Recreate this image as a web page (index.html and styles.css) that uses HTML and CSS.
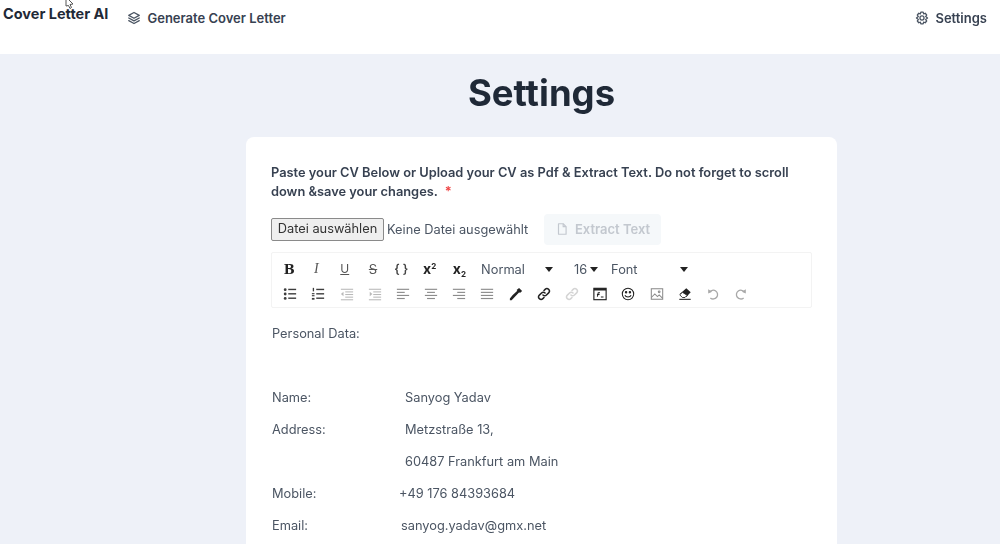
FILE: index.html
```html
<!DOCTYPE html>
<html lang="en">
<head>
<meta charset="utf-8">
<title>Settings</title>
<link rel="stylesheet" href="styles.css">
</head>
<body>
<svg class="defs" width="0" height="0" aria-hidden="true">
  <symbol id="i-ul" viewBox="0 0 16 16"><g fill="currentColor"><circle cx="2.5" cy="3" r="1.6"/><circle cx="2.5" cy="8" r="1.6"/><circle cx="2.5" cy="13" r="1.6"/><rect x="6" y="2" width="9" height="1.6"/><rect x="6" y="7" width="9" height="1.6"/><rect x="6" y="12" width="9" height="1.6"/></g></symbol>
  <symbol id="i-ol" viewBox="0 0 16 16"><g fill="currentColor"><rect x="2" y="1" width="1.5" height="4"/><rect x="1" y="7" width="3" height="1.3"/><rect x="1" y="9.3" width="3" height="1.3"/><rect x="1" y="12.5" width="3" height="2"/><rect x="6" y="2" width="9" height="1.6"/><rect x="6" y="7" width="9" height="1.6"/><rect x="6" y="12" width="9" height="1.6"/></g></symbol>
  <symbol id="i-out" viewBox="0 0 16 16"><g fill="currentColor"><path d="M1 8l3-2.5v5z"/><rect x="1" y="2" width="14" height="1.2"/><rect x="6" y="5" width="9" height="1.2"/><rect x="6" y="8" width="9" height="1.2"/><rect x="6" y="11" width="9" height="1.2"/><rect x="1" y="14" width="14" height="1.2"/></g></symbol>
  <symbol id="i-in" viewBox="0 0 16 16"><g fill="currentColor"><path d="M5 8L2 5.500v5z"/><rect x="1" y="2" width="14" height="1.2"/><rect x="6" y="5" width="9" height="1.2"/><rect x="6" y="8" width="9" height="1.2"/><rect x="6" y="11" width="9" height="1.2"/><rect x="1" y="14" width="14" height="1.2"/></g></symbol>
  <symbol id="i-left" viewBox="0 0 16 16"><g fill="currentColor"><rect x="1" y="2" width="14" height="1.3"/><rect x="1" y="5.500" width="9" height="1.3"/><rect x="1" y="9" width="14" height="1.3"/><rect x="1" y="12.500" width="9" height="1.3"/></g></symbol>
  <symbol id="i-center" viewBox="0 0 16 16"><g fill="currentColor"><rect x="1" y="2" width="14" height="1.3"/><rect x="3.500" y="5.500" width="9" height="1.3"/><rect x="1" y="9" width="14" height="1.3"/><rect x="3.500" y="12.500" width="9" height="1.3"/></g></symbol>
  <symbol id="i-right" viewBox="0 0 16 16"><g fill="currentColor"><rect x="1" y="2" width="14" height="1.3"/><rect x="6" y="5.500" width="9" height="1.3"/><rect x="1" y="9" width="14" height="1.3"/><rect x="6" y="12.500" width="9" height="1.3"/></g></symbol>
  <symbol id="i-just" viewBox="0 0 16 16"><g fill="currentColor"><rect x="1" y="2" width="14" height="1.3"/><rect x="1" y="5.500" width="14" height="1.3"/><rect x="1" y="9" width="14" height="1.3"/><rect x="1" y="12.500" width="14" height="1.3"/></g></symbol>
  <symbol id="i-link" viewBox="0 0 16 16"><g fill="none" stroke="currentColor" stroke-width="1.700" stroke-linecap="round"><path d="M6.800 9.200a2.800 2.800 0 0 0 4 0l2.500-2.500a2.800 2.800 0 0 0-4-4L8 4"/><path d="M9.200 6.800a2.800 2.800 0 0 0-4 0l-2.500 2.500a2.800 2.800 0 0 0 4 4L8 12"/></g></symbol>
</svg>

<div class="frame">
<svg class="cursor" viewBox="0 0 10 10"><path fill="#fff" stroke="#555" stroke-width="1" d="M1-3l7 7-3 .5 1.500 3-1.500 1-1.500-3L1 6z"/></svg>
<header class="topbar">
  <div class="topbar-left">
    <a class="brand">Cover Letter AI</a>
    <a class="nav-link">
      <svg class="nav-icon" viewBox="0 0 24 24" fill="none" stroke="currentColor" stroke-width="2.200" stroke-linejoin="round" stroke-linecap="round"><path d="M12 2.500l9 5-9 5-9-5z"/><path d="M3 12l9 5 9-5"/><path d="M3 16.500l9 5 9-5"/></svg>
      Generate Cover Letter
    </a>
  </div>
  <a class="nav-link">
    <svg class="nav-icon" viewBox="0 0 24 24" fill="none" stroke="currentColor" stroke-width="2.200" stroke-linejoin="round"><path d="M10 2h4l.8 3 2.700-1.100 2.500 3-1.700 2.500L21.500 12l-3.200 2.600 1.700 2.500-2.500 3-2.700-1.100L14 22h-4l-.8-3-2.700 1.100-2.500-3 1.700-2.500L2.500 12l3.200-2.600L4 6.900l2.500-3L9.200 5z"/><circle cx="12" cy="12" r="3.500"/></svg>
    Settings
  </a>
</header>

<main class="page">
  <h1 class="page-title">Settings</h1>
  <section class="card">
    <p class="cv-label">Paste your CV Below or Upload your CV as Pdf &amp; Extract Text. Do not forget to scroll down &amp;save your changes. <span class="req">*</span></p>

    <div class="upload-row">
      <span class="file-button">Datei auswählen</span>
      <span class="file-name">Keine Datei ausgewählt</span>
      <span class="extract-button">
        <svg class="extract-icon" viewBox="0 0 24 24" fill="none" stroke="currentColor" stroke-width="2" stroke-linejoin="round"><path d="M6 3h8l5 5v13H6z"/><path d="M14 3v5h5"/></svg>
        Extract Text
      </span>
    </div>

    <div class="toolbar">
      <div class="tool-row">
        <span class="tool tool-b">B</span>
        <span class="tool tool-i">I</span>
        <span class="tool tool-u">U</span>
        <span class="tool tool-s">S</span>
        <span class="tool tool-code">{ }</span>
        <span class="tool tool-x"><span>x<sup>2</sup></span></span>
        <span class="tool tool-x tool-x-sub"><span>x<sub>2</sub></span></span>
        <span class="select select-normal">Normal<i class="caret"></i></span>
        <span class="select select-size">16<i class="caret"></i></span>
        <span class="select select-font">Font<i class="caret"></i></span>
      </div>
      <div class="tool-row tool-row-icons">
        <span class="tool soft"><svg class="ico"><use href="#i-ul"/></svg></span>
        <span class="tool soft"><svg class="ico"><use href="#i-ol"/></svg></span>
        <span class="tool faint"><svg class="ico"><use href="#i-out"/></svg></span>
        <span class="tool faint"><svg class="ico"><use href="#i-in"/></svg></span>
        <span class="tool mid"><svg class="ico"><use href="#i-left"/></svg></span>
        <span class="tool mid"><svg class="ico"><use href="#i-center"/></svg></span>
        <span class="tool mid"><svg class="ico"><use href="#i-right"/></svg></span>
        <span class="tool mid"><svg class="ico"><use href="#i-just"/></svg></span>
        <span class="tool"><svg class="ico" viewBox="0 0 16 16"><path fill="currentColor" d="M11.500 1l3.500 3.500-2.500 2.300-.8-.8L6.500 11.500 3 15l-2 0 0-2L4 9.500 9.500 4.300l-.8-.8z"/></svg></span>
        <span class="tool"><svg class="ico"><use href="#i-link"/></svg></span>
        <span class="tool pale"><svg class="ico"><use href="#i-link"/></svg></span>
        <span class="tool"><svg class="ico" viewBox="0 0 16 16"><rect x="1" y="1.500" width="14" height="13" fill="none" stroke="currentColor" stroke-width="1.300"/><rect x="1" y="1.500" width="14" height="2.500" fill="currentColor"/><path fill="none" stroke="currentColor" stroke-width="1.200" d="M5 11l1-4.500h2M4.500 8.500h3M9 11.500h3"/></svg></span>
        <span class="tool"><svg class="ico" viewBox="0 0 16 16" fill="none" stroke="currentColor" stroke-width="1.200"><circle cx="8" cy="8" r="6.500"/><path d="M4.500 9.500c1 2.500 6 2.500 7 0"/><circle cx="5.800" cy="6" r=".8" fill="currentColor"/><circle cx="10.200" cy="6" r=".8" fill="currentColor"/></svg></span>
        <span class="tool mid"><svg class="ico" viewBox="0 0 16 16" fill="none" stroke="currentColor" stroke-width="1.200"><rect x="1.500" y="2" width="13" height="12"/><path d="M1.500 12l4-4 3 3 2-2 4 4"/><circle cx="10.500" cy="5.500" r="1"/></svg></span>
        <span class="tool"><svg class="ico" viewBox="0 0 16 16"><path fill="currentColor" d="M9.500 1.500l5 4.500-5 5.500H6L2 8z"/><path fill="#fff" stroke="currentColor" d="M5 6L2 9l3 3h3l2.500-2.500z"/><rect x="1.500" y="13.500" width="13" height="1.200" fill="currentColor"/></svg></span>
        <span class="tool pale-strong"><svg class="ico" viewBox="0 0 16 16" fill="none" stroke="currentColor" stroke-width="1.500"><path d="M4 6a5 5 0 1 1 1 6.500"/><path fill="currentColor" stroke="none" d="M2.500 2.500L7 5.500l-4.500 2z"/></svg></span>
        <span class="tool pale-strong"><svg class="ico" viewBox="0 0 16 16" fill="none" stroke="currentColor" stroke-width="1.500"><path d="M12 6a5 5 0 1 0-1 6.500"/><path fill="currentColor" stroke="none" d="M13.500 2.500L9 5.500l4.500 2z"/></svg></span>
      </div>
    </div>

    <div class="editor">
      <p class="line">Personal Data:</p>
      <p class="line"></p>
      <p class="line line-row"><span class="key">Name:</span><span>Sanyog Yadav</span></p>
      <p class="line line-row"><span class="key">Address:</span><span>Metzstraße 13,</span></p>
      <p class="line line-row"><span class="key"></span><span>60487 Frankfurt am Main</span></p>
      <p class="line line-row"><span class="key key-mobile">Mobile:</span><span>+49 176 84393684</span></p>
      <p class="line line-row"><span class="key key-email">Email:</span><span>sanyog.yadav@gmx.net</span></p>
    </div>
  </section>
</main>
</div>
</body>
</html>
```
FILE: styles.css
```css
* { box-sizing: border-box; }
html, body { margin: 0; height: 544px; overflow: hidden; }
body {
  background: #eef1f8;
  font-family: Inter, "Liberation Sans", sans-serif;
  color: #374151;
}
.defs { position: absolute; }
.frame { position: relative; height: 544px; overflow: hidden; filter: blur(0.35px); }
.cursor { position: absolute; left: 65px; top: 0; width: 10px; height: 10px; }

.topbar {
  height: 54px;
  background: #fff;
  display: flex;
  justify-content: space-between;
  align-items: flex-start;
  padding: 0 13px 0 3px;
}
.topbar-left { display: flex; align-items: flex-start; gap: 19px; }
.brand {
  font-size: 14.500px;
  font-weight: 700;
  line-height: 18px;
  padding-top: 5px;
  color: #1f2937;
}
.nav-link {
  display: flex;
  align-items: center;
  gap: 6px;
  font-size: 13px;
  font-weight: 600;
  line-height: 18px;
  padding-top: 9px;
  color: #374151;
}
.nav-icon { width: 14px; height: 14px; flex: none; color: #4b5563; }

.page { display: flex; flex-direction: column; align-items: center; padding-left: 83px; }
.page-title {
  margin: 16px 0 20px;
  font-size: 36.500px;
  font-weight: 700;
  line-height: 47px;
  color: #1f2937;
}
.card {
  width: 591px;
  height: 407px;
  background: #fff;
  border-radius: 8px 8px 0 0;
  padding: 26px 25px 0;
}
.cv-label {
  margin: 0;
  font-size: 12.830px;
  font-weight: 600;
  line-height: 19px;
  color: #374151;
}
.req { color: #ef4444; margin-left: 4px; }

.upload-row { display: flex; align-items: center; margin-top: 13px; height: 31px; font-size: 12.800px; }
.file-button {
  width: 113px;
  height: 23px;
  line-height: 20px;
  text-align: center;
  background: #efefef;
  border: 1px solid #8a8a8a;
  border-radius: 2px;
  color: #333;
}
.file-name { margin-left: 3px; width: 157px; color: #4b5563; padding-bottom: 1px; }
.extract-button {
  width: 117px;
  height: 31px;
  display: flex;
  align-items: center;
  justify-content: center;
  gap: 6px;
  background: #f5f8fa;
  border-radius: 4px;
  padding-bottom: 1px;
  font-size: 13px;
  font-weight: 600;
  color: #c3c8cf;
}
.extract-icon { width: 14px; height: 14px; }

.toolbar {
  margin-top: 7px;
  width: 541px;
  height: 56px;
  border: 1px solid #f3f3f3;
  border-radius: 2px;
  padding: 4px 4px 0;
}
.tool-row { display: flex; gap: 4px; height: 24px; align-items: center; }
.tool-row-icons { margin-top: 1px; padding-left: 2px; gap: 3.900px; }
.tool {
  width: 24.300px;
  height: 22px;
  flex: none;
  display: flex;
  align-items: center;
  justify-content: center;
  color: #222;
  border-radius: 2px;
  font-size: 13px;
  line-height: 1;
}
.ico { width: 14px; height: 14px; }
.tool.soft { color: #3d3d3d; }
.tool.faint { color: #b9b9b9; }
.tool.mid { color: #8c8c8c; }
.tool.pale { color: #d4d4d4; }
.tool.pale-strong { color: #a8a8a8; }
.tool-b { font-family: "DejaVu Serif", serif; font-weight: 700; padding-left: 2px; }
.tool-i { font-family: "Liberation Serif", serif; font-size: 14px; font-style: italic; color: #555; }
.tool-u { text-decoration: underline; font-size: 12px; color: #555; }
.tool-s { text-decoration: line-through; color: #555; }
.tool-code { font-size: 12px; font-weight: 600; white-space: pre; color: #444; }
.tool-x { font-weight: 700; font-size: 14px; }
.tool-x-sub { padding-left: 3px; }
.tool-x sup, .tool-x sub { font-size: 8px; line-height: 0; }
.tool-x sup { vertical-align: 5px; }
.tool-x sub { vertical-align: -3px; }
.select {
  height: 22px;
  display: flex;
  align-items: center;
  justify-content: space-between;
  flex: none;
  font-size: 12.800px;
  color: #4b5563;
  padding: 0 8px 0 5px;
}
.select-normal { width: 85px; margin-left: 2px; }
.select-size { width: 32px; margin-left: 4px; padding: 0 3px 0 5px; }
.select-font { width: 90px; margin-left: 1px; }
.caret {
  width: 0;
  height: 0;
  border-left: 4.500px solid transparent;
  border-right: 4.500px solid transparent;
  border-top: 5px solid #222;
}

.editor { margin-top: 10px; font-size: 12.800px; color: #4b5563; }
.line { margin: 0 0 0 1px; height: 32px; line-height: 32px; }
.line-row { display: flex; }
.key { width: 133px; flex: none; }
.key-mobile { width: 127px; }
.key-email { width: 129px; }
```
